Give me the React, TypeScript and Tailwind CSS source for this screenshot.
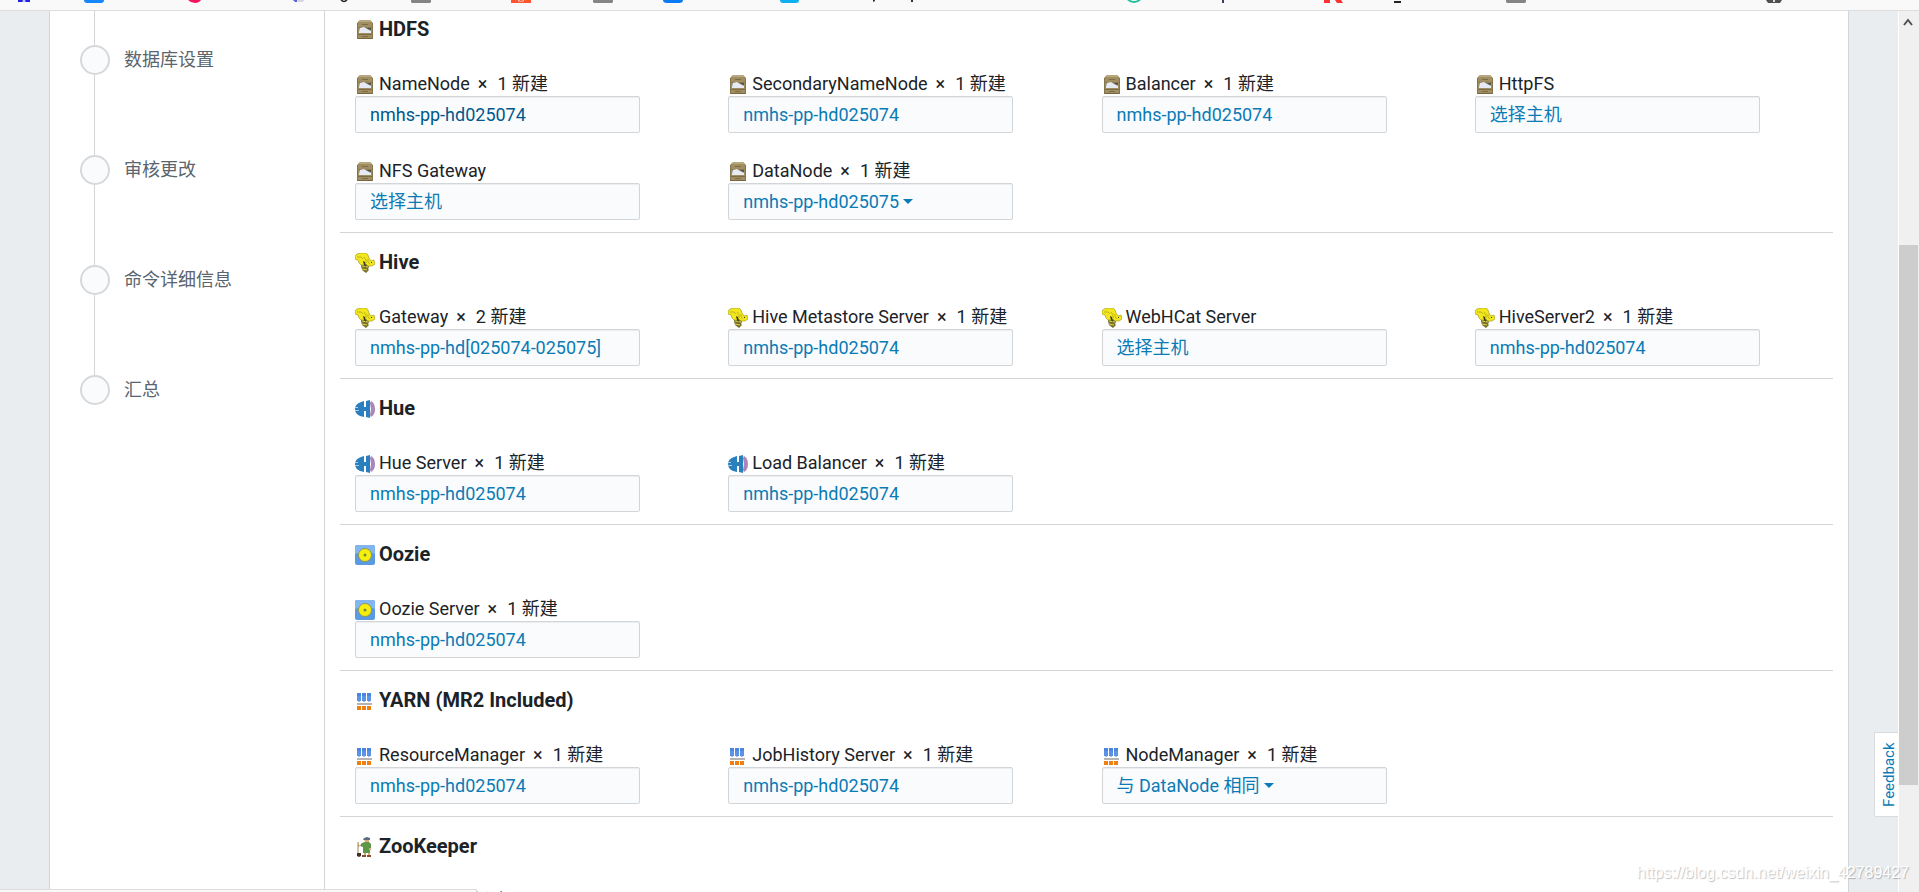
import * as React from "react";

type ServiceId = "hdfs" | "hive" | "hue" | "oozie" | "yarn" | "zookeeper";

interface Role {
  name: string;
  /** Number of newly assigned hosts */
  added?: number;
  /** Assigned hosts, or a prompt when nothing is assigned yet */
  hosts: string;
  dropdown?: boolean;
  active?: boolean;
}

interface Service {
  id: ServiceId;
  title: string;
  roles: Role[];
}

const STEPS = ["数据库设置", "审核更改", "命令详细信息", "汇总"];

const SERVICES: Service[] = [
  {
    id: "hdfs",
    title: "HDFS",
    roles: [
      { name: "NameNode", added: 1, hosts: "nmhs-pp-hd025074", active: true },
      { name: "SecondaryNameNode", added: 1, hosts: "nmhs-pp-hd025074" },
      { name: "Balancer", added: 1, hosts: "nmhs-pp-hd025074" },
      { name: "HttpFS", hosts: "选择主机" },
      { name: "NFS Gateway", hosts: "选择主机" },
      { name: "DataNode", added: 1, hosts: "nmhs-pp-hd025075", dropdown: true },
    ],
  },
  {
    id: "hive",
    title: "Hive",
    roles: [
      { name: "Gateway", added: 2, hosts: "nmhs-pp-hd[025074-025075]" },
      { name: "Hive Metastore Server", added: 1, hosts: "nmhs-pp-hd025074" },
      { name: "WebHCat Server", hosts: "选择主机" },
      { name: "HiveServer2", added: 1, hosts: "nmhs-pp-hd025074" },
    ],
  },
  {
    id: "hue",
    title: "Hue",
    roles: [
      { name: "Hue Server", added: 1, hosts: "nmhs-pp-hd025074" },
      { name: "Load Balancer", added: 1, hosts: "nmhs-pp-hd025074" },
    ],
  },
  {
    id: "oozie",
    title: "Oozie",
    roles: [{ name: "Oozie Server", added: 1, hosts: "nmhs-pp-hd025074" }],
  },
  {
    id: "yarn",
    title: "YARN (MR2 Included)",
    roles: [
      { name: "ResourceManager", added: 1, hosts: "nmhs-pp-hd025074" },
      { name: "JobHistory Server", added: 1, hosts: "nmhs-pp-hd025074" },
      { name: "NodeManager", added: 1, hosts: "与 DataNode 相同", dropdown: true },
    ],
  },
  {
    id: "zookeeper",
    title: "ZooKeeper",
    roles: [{ name: "Server", added: 1, hosts: "nmhs-pp-hd025074" }],
  },
];

/** Artwork for each service, drawn on a 20x20 grid */
const ICONS: Record<ServiceId, React.ReactNode> = {
  hdfs: (
    <>
      <path d="M5 0h10l3 3v16H2V3z" fill="#a08e62" />
      <path d="M5 0h10l2 2H3z" fill="#b8a87e" />
      <path d="M2 3h1v16H2zM17 3h1v16h-1z" fill="#85754c" />
      <path d="M7 4h6v1H7z" fill="#7d6d45" />
      <path d="M3 7h14v1H3z" fill="#8b7b52" />
      <path d="M4 8h12v5H4z" fill="#8d8a80" />
      <path d="M4 12l1-4 4-1 3 2 4 2v2H4z" fill="#e6eaf2" />
      <path d="M12 8h4v2l-3-1z" fill="#54503f" />
      <path d="M3 14h14v1H3zM7 16h6v1H7z" fill="#7d6d45" />
      <path d="M3 18h14v1H3z" fill="#75663f" />
    </>
  ),
  hive: (
    <>
      <path d="M6 9l7 2 1 3-1 2 1 1-3 3-4-3-1-4z" fill="#77702c" />
      <path d="M7 13l6 1M7 16l5 1" stroke="#ddd44a" strokeWidth="1" />
      <path
        d="M0 3l2-2 4-1 5 0 2 2 1 3 2 3 3-1 1 4-3 2-4 0-2-2-2 1-3 0-2-2-1-3-3-1z"
        fill="#f1e71c"
        stroke="#a8a01e"
        strokeWidth="0.7"
      />
      <path d="M2 4l4 0 2 2M9 4l2 3 0 3M13 6l0 3 2 2" fill="none" stroke="#b3aa1c" strokeWidth="0.8" />
      <path d="M8 8l2 1 1 5-2-2z" fill="#3a361b" />
      <path d="M16 9h1v1h-1z" fill="#3a361b" />
    </>
  ),
  hue: (
    <>
      <path d="M6 3l3-1v6h2V2l4-1v18l-4-1v-6H9v6l-4-1Q0 15 0 10t6-7z" fill="#2a7fbf" />
      <path d="M0 8h3v1H0zM0 11h4v1H0z" fill="#a9cde6" />
      <path d="M16 2q4 2 4 8t-4 8l-1-2 1-6-1-6z" fill="#a987bd" />
    </>
  ),
  oozie: (
    <>
      <rect width="20" height="20" rx="2" fill="#5b9ae0" />
      <path d="M2 0h16l2 2v7Q10 4 0 9V2z" fill="#83b5f0" />
      <circle cx="10" cy="10" r="6.5" fill="#f7ee0c" stroke="#8f9a52" />
      <circle cx="10" cy="10" r="1.5" fill="#6d8a45" />
    </>
  ),
  yarn: (
    <>
      <path d="M2 2h4v3H2zM7 2h4v3H7zM12 2h4v3h-4z" fill="#4a86e0" />
      <path d="M2 5h4v5H2zM7 5h4v5H7zM12 5h4v5h-4z" fill="#5c93e6" />
      <path d="M3 10h2v1H3zM8 10h2v1H8zM13 10h2v1h-2z" fill="#9cbcee" />
      <rect x="2" y="12" width="15" height="2" fill="#b4b4b4" />
      <path d="M2 15h4v4H2zM7 15h4v4H7zM12 15h4v4h-4z" fill="#ee7f10" />
    </>
  ),
  zookeeper: (
    <>
      <path d="M9 1l3-1 3 1v2H8z" fill="#5c6b80" />
      <path d="M9 3h5v2l-2 1-2-1z" fill="#d9ae86" />
      <path d="M7 6l3-1h4l2 2v4l-1 1v4H8v-6L5 9l1-2z" fill="#5f9648" />
      <path d="M3 7l2 1-1 2-1 0zM14 11l2 0v2h-2z" fill="#d9ae86" />
      <path d="M3 5v12" stroke="#a97c50" strokeWidth="1" />
      <path d="M2 16h4v3l-2 1-2-1z" fill="#3f302a" />
      <path d="M9 16h2v2H9zM13 16h2v2h-2z" fill="#d9ae86" />
      <path d="M7 18h4v2H7zM12 18h4v2h-4z" fill="#8a4f28" />
    </>
  ),
};

function ServiceIcon({ id }: { id: ServiceId }) {
  return (
    <svg viewBox="0 0 20 20" className="mt-[3px] size-5 shrink-0" aria-hidden="true">
      {ICONS[id]}
    </svg>
  );
}

/** Bottom edge of the browser's bookmark bar */
function BookmarkBar() {
  return (
    <div className="h-[11px] shrink-0 overflow-hidden border-b border-[#dddddd] bg-[#f9f9f9]">
      <svg width="1919" height="4" viewBox="0 0 1919 4" className="block" aria-hidden="true">
        <path d="M18 0h4l2 1 2-1h4v2h-4l-2-1-2 1h-4z" fill="#2222dd" />
        <path d="M84 0h20q0 3-3 3H87q-3 0-3-3z" fill="#1686fb" />
        <path d="M188 0h13q-2 3-6 3t-7-3z" fill="#f5145c" />
        <path d="M293 0h4v2h-2z" fill="#5b60d8" />
        <path d="M297 0h7l-1 2h-5z" fill="#d5d5e2" />
        <path d="M341 0q3 3 6 0" fill="none" stroke="#222" strokeWidth="1.5" />
        <path d="M411 0h20v2l-1 1h-18l-1-1zM593 0h20v2l-1 1h-18l-1-1zM1506 0h20v2l-1 1h-18l-1-1z" fill="#858585" />
        <path d="M511 0h20v3h-20z" fill="#ff5430" />
        <path d="M518 0q3 2 6 0v1q-3 1-6 0z" fill="#fff" />
        <path d="M663 0h20q0 3-4 3h-12q-4 0-4-3z" fill="#0a7bf5" />
        <path d="M780 0h19q0 3-3 3h-13q-3 0-3-3z" fill="#0fb0f0" />
        <path d="M873 0h2v1l-2 1zM911 0h2v2h-2z" fill="#333" />
        <path d="M1127 0h3q4 2 8 0h3q-3 3-7 3t-7-3z" fill="#1fbf9c" />
        <path d="M1222 0h2v3h-2z" fill="#3b3f66" />
        <path d="M1324 0h6v3h-6zM1335 0h6l2 3h-6z" fill="#fa3236" />
        <path d="M1394 1h7v2h-7z" fill="#222" />
        <path d="M1766 0h16l-2 3h-12z" fill="#505050" />
        <path d="M1773 0h2v2h-2z" fill="#ddd" />
      </svg>
    </div>
  );
}

function StepList() {
  return (
    <nav className="w-[276px] shrink-0 border-x border-[#d3d6d9] pl-[30px]">
      <div className="ml-[14px] h-[34px] w-px bg-[#d3d6d9]" />
      <ol>
        {STEPS.map((step, index) => (
          <li key={step}>
            <div className="flex h-[30px] items-center gap-3.5">
              <span className="size-[30px] rounded-full border-2 border-[#d6d9dc] bg-[#fafbfd]" />
              <span className="text-[#5a656d]">{step}</span>
            </div>
            {index < STEPS.length - 1 && (
              <div className="ml-[14px] h-20 w-px bg-[#d3d6d9]" />
            )}
          </li>
        ))}
      </ol>
    </nav>
  );
}

function RoleField({ role, service }: { role: Role; service: ServiceId }) {
  const id = `${service}-${role.name.replace(/\s+/g, "-")}`;
  return (
    <div className="px-[15px]">
      <label htmlFor={id} className="flex h-6 gap-1 whitespace-nowrap">
        <ServiceIcon id={service} />
        <span>{role.name}</span>
        {role.added && (
          <>
            <span className="ml-1">×</span>
            <span className="ml-1.5">{role.added} 新建</span>
          </>
        )}
      </label>
      <button
        id={id}
        type="button"
        className={`flex h-[37px] w-[285px] items-center rounded-xs border border-[#d3d6d9] bg-[#fafbfd] px-3.5 shadow-[inset_0_1px_1px_rgba(0,0,0,0.06)] ${
          role.active ? "text-[#00598c]" : "text-[#0b7bb5]"
        }`}
      >
        {role.hosts}
        {role.dropdown && (
          <span className="ml-1 border-x-5 border-t-5 border-x-transparent border-t-[#0b7bb5]" />
        )}
      </button>
    </div>
  );
}

function ServiceSection({ service, first }: { service: Service; first: boolean }) {
  return (
    <section className={first ? "pt-1.5 pb-3" : "border-t border-[#d3d6d9] pt-[17px] pb-3"}>
      <h2 className="flex h-6 gap-1 px-[15px] text-[20px] leading-6 font-bold">
        <ServiceIcon id={service.id} />
        {service.title}
      </h2>
      <div className="mt-[31px] grid grid-cols-4 gap-y-[26px]">
        {service.roles.map((role) => (
          <RoleField key={role.name} role={role} service={service.id} />
        ))}
      </div>
    </section>
  );
}

function Scrollbar() {
  return (
    <div className="flex w-[21px] shrink-0 flex-col border-l border-white bg-[#f0f0f0]">
      <svg viewBox="0 0 20 20" className="mt-px size-5 shrink-0" aria-hidden="true">
        <path d="M5 13l4-5 4 5" fill="none" stroke="#505050" strokeWidth="2" />
      </svg>
      <div className="grow-[213]" />
      <div className="mr-px grow-[540] bg-[#cdcdcd]" />
      <div className="grow-[107]" />
    </div>
  );
}

export default function App() {
  return (
    <div className="relative flex h-screen flex-col overflow-hidden bg-[#e9edf0] font-[Roboto,'Noto_Sans_CJK_SC',sans-serif] text-[18px] leading-6 text-[#1b2328]">
      <BookmarkBar />
      <div className="flex min-h-0 flex-1">
        <div className="flex min-w-0 flex-1 overflow-hidden pr-[49px] pl-[49px]">
          <div className="flex min-w-0 flex-1 border-r border-[#d3d6d9] bg-white">
            <StepList />
            <main className="min-w-0 flex-1 pr-[15px] pl-[15px]">
              {SERVICES.map((service, index) => (
                <ServiceSection key={service.id} service={service} first={index === 0} />
              ))}
            </main>
          </div>
        </div>
        <Scrollbar />
      </div>

      <button
        type="button"
        className="absolute right-[21px] bottom-[75px] flex h-[85px] w-6 rotate-180 items-center justify-center rounded-r-xs border border-l-0 border-[#d9dcdf] bg-white pr-1 text-[15px] leading-4 text-[#0b7bb5] [writing-mode:vertical-rl]"
      >
        Feedback
      </button>
      <div className="absolute bottom-0 left-0 h-[3px] w-[477px] border-t border-r border-[#dcdcdc] bg-[#f9f9f9]" />
      <p className="absolute right-2.5 bottom-[7px] font-['Liberation_Sans',sans-serif] text-[16px] text-white [text-shadow:1px_1px_1px_rgba(0,0,0,0.25)]">
        https://blog.csdn.net/weixin_42789427
      </p>
    </div>
  );
}
